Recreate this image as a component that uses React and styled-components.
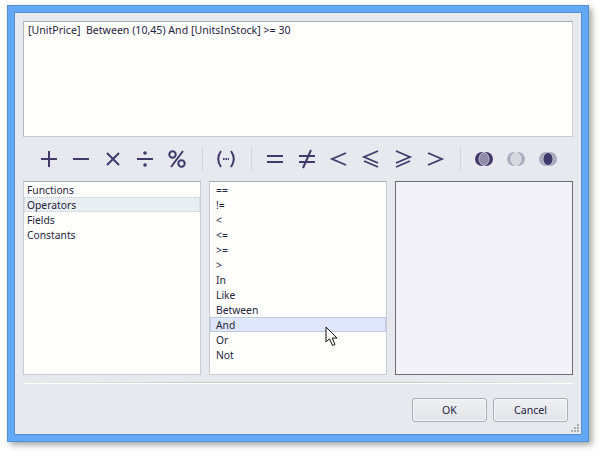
import styled, { createGlobalStyle } from 'styled-components'

const GlobalStyle = createGlobalStyle`
  html, body {
    margin: 0;
    padding: 0;
    background: #fff;
  }
  * {
    box-sizing: border-box;
  }
`

const Page = styled.div`
  width: 602px;
  height: 457px;
  padding: 5px 0 0 7px;
  font-family: 'Noto Sans', 'Open Sans', sans-serif;
  font-size: 10.6px;
  color: #1f2340;
`
const Window = styled.div`
  width: 582px;
  height: 437px;
  padding: 6px;
  background: #63a9f8;
  border: 1px solid #4f8fd6;
  box-shadow: 3px 3px 6px rgba(60, 60, 50, 0.45);
`
const Content = styled.div`
  position: relative;
  height: 100%;
  padding: 8px;
  background: #e6eaee;
  border: 1px solid #528fd8;
  display: flex;
  flex-direction: column;
`
const Editor = styled.div`
  height: 116px;
  padding: 0 4px;
  background: #fffffd;
  border: 1px solid #c9cbd0;
  border-top-color: #a6a9b0;
  border-left-color: #b4b7bc;
  line-height: 16px;
  white-space: pre;
`
const Toolbar = styled.div`
  height: 44px;
  padding-left: 10px;
  display: flex;
  align-items: center;
`
const ToolButton = styled.div`
  width: 32px;
  height: 28px;
  display: flex;
  align-items: center;
  justify-content: center;
`
const ToolSeparator = styled.div`
  width: 1px;
  height: 24px;
  margin: 0 7px 0 9px;
  background: #d2d5da;
`
const Panels = styled.div`
  display: grid;
  grid-template-columns: 178px 178px 178px;
  gap: 8px;
  height: 194px;
`
const List = styled.div`
  background: #fffffd;
  border: 1px solid #c9cbd0;
  border-top-color: #a6a9b0;
  font-size: 10.3px;
`
const Row = styled.div`
  height: 15px;
  padding-left: ${(p) => (p.$indent ? 6 : 3)}px;
  line-height: 17px;
  background: ${(p) => (p.$active ? '#e0e7fa' : p.$selected ? '#e9eef2' : 'transparent')};
  box-shadow: ${(p) => (p.$active ? 'inset 0 0 0 1px #bccbe8' : 'none')};
  outline: ${(p) => (p.$selected ? '1px dotted #c9ced4' : 'none')};
  outline-offset: -1px;
`
const Preview = styled.div`
  background: #f3f2f8;
  border: 1px solid #6d6d6d;
`
const Divider = styled.div`
  height: 2px;
  margin-top: 7px;
  background: linear-gradient(90deg, rgba(200, 202, 206, 0), #c8cacf 30%, #c8cacf 70%, rgba(200, 202, 206, 0));
  border-bottom: 1px solid #fff;
`
const Footer = styled.div`
  display: flex;
  justify-content: flex-end;
  gap: 6px;
  margin-top: 14px;
  padding-right: 5px;
`
const Button = styled.div`
  width: 75px;
  height: 24px;
  display: flex;
  align-items: center;
  justify-content: center;
  font-size: 10.6px;
  border: 1px solid #a9adb3;
  border-radius: 3px;
  background: linear-gradient(#eef0f3, #e2e4e9);
  box-shadow: inset 0 0 0 1px #f5f6f8;
`
const CursorIcon = styled.svg`
  position: absolute;
  left: 310px;
  top: 313px;
`
const Grip = styled.svg`
  position: absolute;
  right: 0;
  bottom: 0;
`

const iconColor = '#3f3a6b'

const Glyph = ({ children }) => (
  <svg width="20" height="20" viewBox="0 0 20 20" fill="none" stroke={iconColor} strokeWidth="2">
    {children}
  </svg>
)

const SetIcon = ({ side, lens, edge }) => (
  <svg width="20" height="16" viewBox="0 0 20 16">
    <circle cx="8" cy="8" r="7" fill={side} />
    <circle cx="12" cy="8" r="7" fill={side} />
    <path d="M10 1.300A7 7 0 0 1 10 14.700A7 7 0 0 1 10 1.300Z" fill={lens} stroke={edge} strokeWidth="0.7" />
  </svg>
)

const arithmetic = [
  <Glyph key="plus"><path d="M2 10H18M10 2V18" /></Glyph>,
  <Glyph key="minus"><path d="M2 10H18" /></Glyph>,
  <Glyph key="times"><path d="M4 4L16 16M16 4L4 16" /></Glyph>,
  <Glyph key="divide">
    <path d="M2 10H18" />
    <circle cx="10" cy="4" r="1.8" fill={iconColor} stroke="none" />
    <circle cx="10" cy="16" r="1.8" fill={iconColor} stroke="none" />
  </Glyph>,
  <Glyph key="percent">
    <circle cx="5.5" cy="5.500" r="3.2" />
    <circle cx="14.500" cy="14.500" r="3.2" />
    <path d="M16 2L4 18" />
  </Glyph>,
]

const compare = [
  <Glyph key="eq"><path d="M2 7H18M2 13H18" /></Glyph>,
  <Glyph key="neq"><path d="M2 7H18M2 13H18M14 1L6 19" /></Glyph>,
  <Glyph key="lt"><path d="M17 4L3 10L17 16" strokeWidth="1.8" /></Glyph>,
  <Glyph key="lte"><path d="M17 2L3 8L17 14M3 12L17 18" strokeWidth="1.800" /></Glyph>,
  <Glyph key="gte"><path d="M3 2L17 8L3 14M17 12L3 18" strokeWidth="1.800" /></Glyph>,
  <Glyph key="gt"><path d="M3 4L17 10L3 16" strokeWidth="1.8" /></Glyph>,
]

const categories = ['Functions', 'Operators', 'Fields', 'Constants']
const operators = ['==', '!=', '<', '<=', '>=', '>', 'In', 'Like', 'Between', 'And', 'Or', 'Not']

export default function App() {
  return (
    <Page>
      <GlobalStyle />
      <Window>
        <Content>
          <Editor>{'[UnitPrice]  Between (10,45) And [UnitsInStock] >= 30'}</Editor>
          <Toolbar>
            {arithmetic.map((icon) => (
              <ToolButton key={icon.key}>{icon}</ToolButton>
            ))}
            <ToolSeparator />
            <ToolButton>
              <Glyph>
                <path d="M5 2C1.5 7 1.5 13 5 18M15 2C18.500 7 18.500 13 15 18" />
                <path d="M7 10H13" strokeDasharray="1.6 0.9" strokeWidth="1.8" />
              </Glyph>
            </ToolButton>
            <ToolSeparator />
            {compare.map((icon) => (
              <ToolButton key={icon.key}>{icon}</ToolButton>
            ))}
            <ToolSeparator />
            <ToolButton>
              <SetIcon side={iconColor} lens="#8f8ba8" edge="#dcdce6" />
            </ToolButton>
            <ToolButton>
              <SetIcon side="#aeaec0" lens="#d6d6df" edge="#eceef2" />
            </ToolButton>
            <ToolButton>
              <SetIcon side="#a9a8bb" lens={iconColor} edge="#dcdce6" />
            </ToolButton>
          </Toolbar>
          <Panels>
            <List>
              {categories.map((name) => (
                <Row key={name} $selected={name === 'Operators'}>{name}</Row>
              ))}
            </List>
            <List>
              {operators.map((name) => (
                <Row key={name} $indent $active={name === 'And'}>{name}</Row>
              ))}
            </List>
            <Preview />
          </Panels>
          <Divider />
          <Footer>
            <Button>OK</Button>
            <Button>Cancel</Button>
          </Footer>
          <CursorIcon width="14" height="21" viewBox="0 0 14 21">
            <path
              d="M1 1V16L4.500 12.800L7.500 19.500L10 18.400L7.200 12H12Z"
              fill="#fff"
              stroke="#111"
              strokeWidth="1"
            />
          </CursorIcon>
          <Grip width="12" height="12" viewBox="0 0 12 12" fill="#a9aeb4">
            <rect x="8" y="2" width="2" height="2" />
            <rect x="5" y="5" width="2" height="2" />
            <rect x="8" y="5" width="2" height="2" />
            <rect x="2" y="8" width="2" height="2" />
            <rect x="5" y="8" width="2" height="2" />
            <rect x="8" y="8" width="2" height="2" />
          </Grip>
        </Content>
      </Window>
    </Page>
  )
}
